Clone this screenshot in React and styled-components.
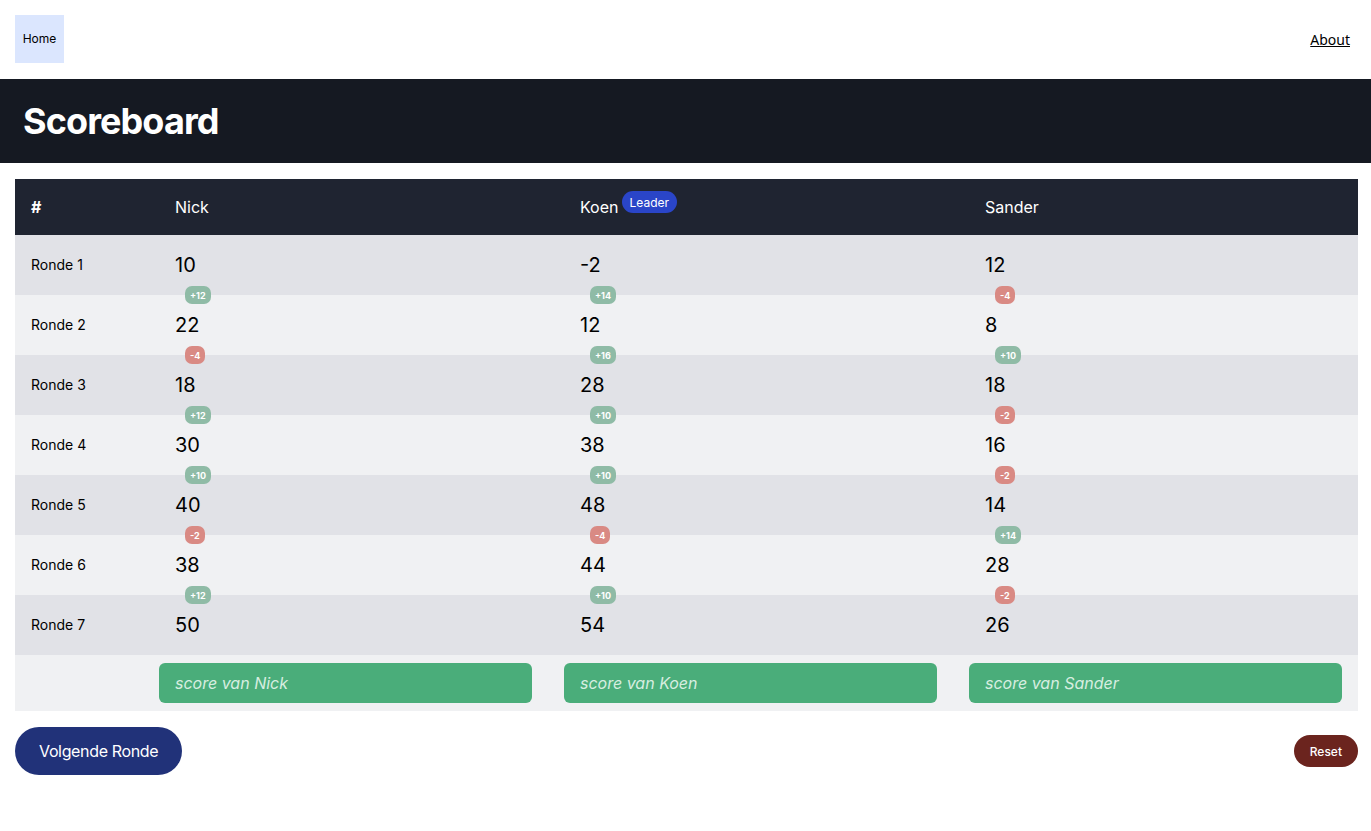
import React from "react";
import styled, { createGlobalStyle } from "styled-components";

const Global = createGlobalStyle`
  * { box-sizing: border-box; }
  body { margin: 0; background: #fff; font-family: Inter, "Liberation Sans", sans-serif; color: #000; }
`;

const Nav = styled.nav`
  height: 79px;
  display: flex;
  align-items: center;
  justify-content: space-between;
  padding: 0 21px 0 15px;
`;

const HomeBtn = styled.button`
  width: 49px;
  height: 48px;
  margin-top: -2px;
  border: none;
  background: #dbe6fe;
  font-family: Inter, sans-serif;
  font-size: 12px;
  color: #000;
  padding: 0;
`;

const AboutLink = styled.a`
  font-family: "Noto Sans", sans-serif;
  font-size: 14px;
  color: #000;
  text-decoration: underline;
`;

const Header = styled.header`
  height: 84px;
  background: #151922;
  display: flex;
  align-items: center;
  padding: 0 23px;
`;

const Title = styled.h1`
  margin: 0;
  color: #fff;
  font-size: 36px;
  font-weight: 700;
  letter-spacing: -0.9px;
`;

const Table = styled.div`
  margin: 16px 13px 0 15px;
  display: grid;
  grid-template-columns: 144px 405px 405px 389px;
`;

const HeadCell = styled.div`
  height: 56px;
  background: #1f2431;
  color: #fff;
  font-size: 16px;
  font-weight: ${(p) => (p.$bold ? 700 : 400)};
  display: flex;
  align-items: center;
  padding-left: 16px;
`;

const LeaderBadge = styled.span`
  display: inline-flex;
  align-items: center;
  height: 22px;
  padding: 0 8px;
  margin-left: 3px;
  margin-top: -10px;
  border-radius: 11px;
  background: #2a45c8;
  color: #fff;
  font-size: 12px;
  font-weight: 400;
`;

const Cell = styled.div`
  position: relative;
  height: 60px;
  padding-bottom: 1px;
  background: ${(p) => (p.$odd ? "#e1e2e7" : "#f0f1f3")};
  display: flex;
  align-items: center;
  padding-left: 16px;
  font-size: ${(p) => (p.$label ? "14px" : "20px")};
  font-weight: 400;
`;

const Delta = styled.span`
  position: absolute;
  left: 26px;
  top: -9px;
  height: 18px;
  padding: 0 5px;
  border-radius: 7px;
  display: flex;
  align-items: center;
  font-size: 9px;
  font-weight: 700;
  color: #fff;
  background: ${(p) => (p.$pos ? "#8fbba6" : "#d98a84")};
  z-index: 1;
`;

const InputCell = styled.div`
  height: 56px;
  background: #f0f1f3;
  display: flex;
  align-items: center;
`;

const ScoreInput = styled.input`
  width: 373px;
  height: 40px;
  border: none;
  border-radius: 6px;
  background: #4aad7a;
  padding: 0 16px;
  font-family: Inter, sans-serif;
  font-size: 16px;
  font-style: italic;
  color: #fff;
  outline: none;
  &::placeholder { color: #d7eee0; }
`;

const Footer = styled.div`
  display: flex;
  justify-content: space-between;
  align-items: center;
  margin: 16px 13px 0 15px;
`;

const NextBtn = styled.button`
  height: 48px;
  padding: 0 24px;
  border: none;
  border-radius: 24px;
  background: #213279;
  color: #fff;
  font-family: Inter, sans-serif;
  font-size: 16px;
  font-weight: 400;
  letter-spacing: -0.35px;
`;

const ResetBtn = styled.button`
  height: 32px;
  padding: 0 16px;
  border: none;
  border-radius: 16px;
  background: #6b241e;
  color: #fff;
  font-family: Inter, sans-serif;
  font-size: 12px;
  font-weight: 500;
`;

const players = ["Nick", "Koen", "Sander"];
const scores = [
  [10, -2, 12],
  [22, 12, 8],
  [18, 28, 18],
  [30, 38, 16],
  [40, 48, 14],
  [38, 44, 28],
  [50, 54, 26],
];

export default function App() {
  return (
    <>
      <Global />
      <Nav>
        <HomeBtn>Home</HomeBtn>
        <AboutLink href="#">About</AboutLink>
      </Nav>
      <Header>
        <Title>Scoreboard</Title>
      </Header>
      <Table>
        <HeadCell $bold>#</HeadCell>
        <HeadCell>Nick</HeadCell>
        <HeadCell>
          Koen<LeaderBadge>Leader</LeaderBadge>
        </HeadCell>
        <HeadCell>Sander</HeadCell>
        {scores.map((row, i) => (
          <React.Fragment key={i}>
            <Cell $odd={i % 2 === 0} $label>
              Ronde {i + 1}
            </Cell>
            {row.map((v, j) => {
              const d = i > 0 ? v - scores[i - 1][j] : null;
              return (
                <Cell key={j} $odd={i % 2 === 0}>
                  {d !== null && (
                    <Delta $pos={d >= 0}>{d >= 0 ? `+${d}` : d}</Delta>
                  )}
                  {v}
                </Cell>
              );
            })}
          </React.Fragment>
        ))}
        <InputCell />
        {players.map((p) => (
          <InputCell key={p}>
            <ScoreInput placeholder={`score van ${p}`} />
          </InputCell>
        ))}
      </Table>
      <Footer>
        <NextBtn>Volgende Ronde</NextBtn>
        <ResetBtn>Reset</ResetBtn>
      </Footer>
    </>
  );
}
